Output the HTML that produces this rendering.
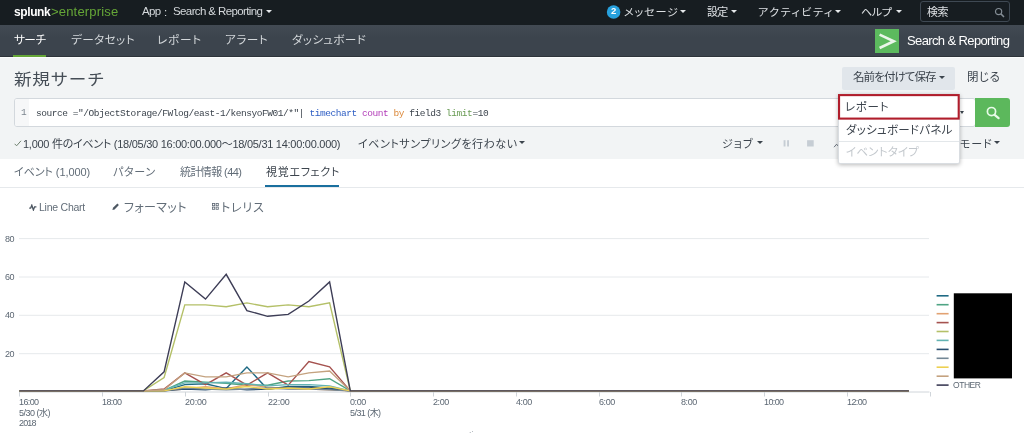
<!DOCTYPE html>
<html lang="ja">
<head>
<meta charset="utf-8">
<title>新規サーチ</title>
<style>
*{box-sizing:border-box;margin:0;padding:0}
html,body{width:1024px;height:433px;overflow:hidden;background:#fff}
body{position:relative;font-family:'Liberation Sans','Noto Sans CJK JP',sans-serif;font-size:12px;color:#3c444d}
.abs{position:absolute;white-space:nowrap}
.t{position:absolute;white-space:nowrap;line-height:1.5;font-feature-settings:'palt';will-change:transform}
.c{position:absolute;width:0;height:0;border-left:3px solid transparent;border-right:3px solid transparent;border-top:3.8px solid #3c444d}
.cw{border-top-color:#e6e9eb}
</style>
</head>
<body>
<div class="abs" style="left:0;top:0;width:1024px;height:24.5px;background:#171d21"></div>
<div class="abs" style="left:0;top:24.5px;width:1024px;height:32.7px;background:linear-gradient(#424a53,#3c444d 40%,#3c444d)"></div>
<div class="abs" style="left:0;top:56.2px;width:1024px;height:1px;background:#2e343a"></div>
<div class="abs" style="left:0;top:57.2px;width:1024px;height:101.8px;background:#f2f4f5"></div>
<div class="abs" style="left:0;top:57.2px;width:1024px;height:1px;background:#fbfcfc"></div>

<!-- top bar shapes -->
<div class="c cw" style="left:266.2px;top:9.6px"></div>
<svg class="abs" style="left:604px;top:3px" width="20" height="18" viewBox="604 3 20 18"><circle cx="613.6" cy="12" r="6.8" fill="#27a1de"/></svg>
<div class="c cw" style="left:679.6px;top:9.6px"></div>
<div class="c cw" style="left:730.8px;top:9.6px"></div>
<div class="c cw" style="left:834.8px;top:9.6px"></div>
<div class="c cw" style="left:896.2px;top:9.6px"></div>
<div class="abs" style="left:920.2px;top:1.4px;width:90px;height:21px;border:1px solid #3f4953;border-radius:3px"></div>
<svg class="abs" style="left:994px;top:6.5px" width="11" height="11" viewBox="0 0 11 11"><circle cx="4.6" cy="4.6" r="3.1" fill="none" stroke="#848d95" stroke-width="1.2"/><path d="M6.9 6.9 L10 10" stroke="#848d95" stroke-width="1.5"/></svg>

<!-- nav bar shapes -->
<div class="abs" style="left:13.4px;top:55.2px;width:33px;height:2px;background:#65a637"></div>
<div class="abs" style="left:874.5px;top:28.8px;width:24.8px;height:24px;background:#5cba5e"></div>
<svg class="abs" style="left:874.5px;top:28.8px" width="24.8" height="24" viewBox="0 0 24.8 24"><path d="M4.6 5.6 L18.8 12.2 L4.6 19" fill="none" stroke="#eaf6ea" stroke-width="2.6"/></svg>

<!-- title row shapes -->
<div class="abs" style="left:841.6px;top:66.6px;width:113.4px;height:23.2px;background:#e1e6eb;border-radius:2px"></div>
<div class="c" style="left:939.4px;top:75.6px"></div>

<!-- search bar -->
<div class="abs" style="left:14.4px;top:98px;width:962px;height:29.2px;background:#fff;border:1px solid #d3d8dd;border-radius:3px"></div>
<div class="abs" style="left:15.4px;top:99px;width:13.4px;height:27.2px;background:#f6f7f8;border-radius:2px 0 0 2px"></div>
<div class="abs" style="left:35.5px;top:106.8px;font-family:'Liberation Mono',monospace;font-size:9.5px;letter-spacing:-0.444px;line-height:14px;color:#3c444d;will-change:transform">source ="/ObjectStorage/FWlog/east-1/kensyoFW01/*"| <span style="color:#2f5fc4">timechart</span> <span style="color:#b23cb8">count</span> <span style="color:#dc8a3c">by</span> field3 <span style="color:#6a9c55">limit</span>=10</div>
<div class="c" style="left:960.2px;top:110.8px;border-left-width:2.4px;border-right-width:2.4px;border-top-width:3.2px"></div>
<div class="abs" style="left:975.3px;top:98.2px;width:34.7px;height:29px;background:#5cb85c;border-radius:0 3px 3px 0"></div>
<svg class="abs" style="left:984px;top:104px" width="17" height="17" viewBox="0 0 17 17"><circle cx="7.5" cy="7.6" r="4.1" fill="none" stroke="#e8fbe8" stroke-width="1.7"/><path d="M10.6 10.8 L14.6 14.2" stroke="#e8fbe8" stroke-width="2.2" stroke-linecap="round"/></svg>

<!-- status row shapes -->
<svg class="abs" style="left:13.6px;top:140.4px" width="8" height="7" viewBox="0 0 8 7"><path d="M0.6 3.8 L2.6 5.8 L7 0.8" fill="none" stroke="#6f806f" stroke-width="1"/></svg>
<div class="c" style="left:518.8px;top:141.2px"></div>
<div class="c" style="left:757.4px;top:141.2px"></div>
<svg class="abs" style="left:780px;top:138px" width="40" height="12" viewBox="780 138 40 12"><g fill="#c6cdd4"><rect x="783.6" y="140.2" width="1.9" height="6.3"/><rect x="787.1" y="140.2" width="1.9" height="6.3"/><rect x="807.1" y="140.2" width="6.6" height="6.3"/></g></svg>
<svg class="abs" style="left:833px;top:142.5px" width="6" height="5" viewBox="0 0 6 5"><path d="M1 4.2 L3.6 1.2 L6 4" fill="none" stroke="#5c6773" stroke-width="0.9"/></svg>
<div class="c" style="left:994px;top:141.2px"></div>

<!-- dropdown -->
<div class="abs" style="left:838px;top:93.8px;width:121.5px;height:70.2px;background:#fff;border:1px solid #d9dde1;border-radius:2px;box-shadow:0 1px 4px rgba(0,0,0,.28)"></div>
<svg class="abs" style="left:836px;top:92px" width="126" height="30" viewBox="836 92 126 30"><rect x="839.05" y="95.1" width="119.65" height="23.5" fill="none" stroke="#b01d2b" stroke-width="2.1"/></svg>
<div class="abs" style="left:839px;top:141px;width:119.5px;height:1px;background:#e3e7ea"></div>

<!-- tabs -->
<div class="abs" style="left:0;top:187px;width:1024px;height:1px;background:#e6e9ec"></div>
<div class="abs" style="left:264.5px;top:184.8px;width:74.5px;height:2px;background:#1a6f9e"></div>

<!-- viz toolbar icons -->
<svg class="abs" style="left:28.8px;top:203.6px" width="8" height="7" viewBox="0 0 8 7"><path d="M0.2 4.2 L1.6 4.2 L2.8 1.2 L4.4 6 L5.6 2.8 L7.4 2.8" fill="none" stroke="#4d5762" stroke-width="1.3"/></svg>
<svg class="abs" style="left:111.8px;top:203.2px" width="7.4" height="7.4" viewBox="0 0 7.4 7.4"><path d="M0.4 7 L1 4.8 L5.4 0.5 L6.9 2 L2.6 6.4 Z" fill="#4d5762"/></svg>
<svg class="abs" style="left:211.6px;top:203.3px" width="7" height="7" viewBox="0 0 7 7"><g fill="none" stroke="#5c6773" stroke-width="0.8"><rect x="0.5" y="0.5" width="2.2" height="2.2"/><rect x="4.1" y="0.5" width="2.2" height="2.2"/><rect x="0.5" y="4.1" width="2.2" height="2.2"/><rect x="4.1" y="4.1" width="2.2" height="2.2"/></g></svg>

<svg class="abs" style="left:0;top:220px" width="1024" height="213" viewBox="0 220 1024 213">
<line x1="19" y1="353.7" x2="929" y2="353.7" stroke="#e6e9ec" stroke-width="1"/>
<line x1="19" y1="315.3" x2="929" y2="315.3" stroke="#e6e9ec" stroke-width="1"/>
<line x1="19" y1="277.0" x2="929" y2="277.0" stroke="#e6e9ec" stroke-width="1"/>
<line x1="19" y1="238.6" x2="929" y2="238.6" stroke="#e6e9ec" stroke-width="1"/>
<line x1="19" y1="392" x2="929.5" y2="392" stroke="#d0d5da" stroke-width="1"/>
<line x1="19.5" y1="392" x2="19.5" y2="396.5" stroke="#d0d5da" stroke-width="1"/>
<line x1="102.5" y1="392" x2="102.5" y2="396.5" stroke="#d0d5da" stroke-width="1"/>
<line x1="185.5" y1="392" x2="185.5" y2="396.5" stroke="#d0d5da" stroke-width="1"/>
<line x1="268.5" y1="392" x2="268.5" y2="396.5" stroke="#d0d5da" stroke-width="1"/>
<line x1="350.5" y1="392" x2="350.5" y2="396.5" stroke="#d0d5da" stroke-width="1"/>
<line x1="433.5" y1="392" x2="433.5" y2="396.5" stroke="#d0d5da" stroke-width="1"/>
<line x1="516.5" y1="392" x2="516.5" y2="396.5" stroke="#d0d5da" stroke-width="1"/>
<line x1="599.5" y1="392" x2="599.5" y2="396.5" stroke="#d0d5da" stroke-width="1"/>
<line x1="681.5" y1="392" x2="681.5" y2="396.5" stroke="#d0d5da" stroke-width="1"/>
<line x1="764.5" y1="392" x2="764.5" y2="396.5" stroke="#d0d5da" stroke-width="1"/>
<line x1="847.5" y1="392" x2="847.5" y2="396.5" stroke="#d0d5da" stroke-width="1"/>
<line x1="930.5" y1="392" x2="930.5" y2="396.5" stroke="#d0d5da" stroke-width="1"/>
<polyline points="19.3,390.9 143.4,390.9 164.1,390.9 184.8,384.6 205.5,383.8 226.2,388.6 246.9,367.0 267.6,389.2 288.2,386.5 308.9,386.5 329.6,388.0 350.3,390.9 908.9,390.9" fill="none" stroke="#1f6a84" stroke-width="1.4" stroke-linejoin="miter"/>
<polyline points="19.3,390.9 143.4,390.9 164.1,390.3 184.8,381.0 205.5,382.1 226.2,383.3 246.9,385.2 267.6,385.2 288.2,381.0 308.9,380.6 329.6,378.7 350.3,390.9 908.9,390.9" fill="none" stroke="#4FA484" stroke-width="1.4" stroke-linejoin="miter"/>
<polyline points="19.3,390.9 143.4,390.9 164.1,390.5 184.8,389.0 205.5,386.7 226.2,388.6 246.9,384.8 267.6,387.1 288.2,388.6 308.9,389.0 329.6,389.8 350.3,390.9 908.9,390.9" fill="none" stroke="#e2a272" stroke-width="1.4" stroke-linejoin="miter"/>
<polyline points="19.3,390.9 143.4,390.9 164.1,389.0 184.8,372.9 205.5,384.6 226.2,372.9 246.9,385.2 267.6,372.9 288.2,385.2 308.9,361.5 329.6,366.8 350.3,390.9 908.9,390.9" fill="none" stroke="#a5524f" stroke-width="1.4" stroke-linejoin="miter"/>
<polyline points="19.3,390.9 143.4,390.9 164.1,377.5 184.8,304.9 205.5,304.9 226.2,306.8 246.9,302.9 267.6,306.8 288.2,304.9 308.9,306.8 329.6,302.9 350.3,390.9 908.9,390.9" fill="none" stroke="#b4c068" stroke-width="1.4" stroke-linejoin="miter"/>
<polyline points="19.3,390.9 143.4,390.9 164.1,390.1 184.8,382.9 205.5,382.9 226.2,382.3 246.9,383.8 267.6,385.9 288.2,384.6 308.9,384.6 329.6,385.9 350.3,390.9 908.9,390.9" fill="none" stroke="#62B3B2" stroke-width="1.4" stroke-linejoin="miter"/>
<polyline points="19.3,390.9 143.4,390.9 164.1,390.9 184.8,389.0 205.5,389.9 226.2,388.0 246.9,389.9 267.6,389.0 288.2,387.1 308.9,387.1 329.6,389.0 350.3,390.9 908.9,390.9" fill="none" stroke="#294E70" stroke-width="1.4" stroke-linejoin="miter"/>
<polyline points="19.3,390.9 143.4,390.9 164.1,390.9 184.8,388.0 205.5,389.0 226.2,389.9 246.9,389.0 267.6,388.0 288.2,389.0 308.9,389.0 329.6,389.9 350.3,390.9 908.9,390.9" fill="none" stroke="#738795" stroke-width="1.4" stroke-linejoin="miter"/>
<polyline points="19.3,390.9 143.4,390.9 164.1,390.9 184.8,386.7 205.5,388.0 226.2,389.0 246.9,386.5 267.6,389.0 288.2,388.0 308.9,389.0 329.6,386.7 350.3,390.9 908.9,390.9" fill="none" stroke="#EDD051" stroke-width="1.4" stroke-linejoin="miter"/>
<polyline points="19.3,390.9 143.4,390.9 164.1,389.8 184.8,372.9 205.5,376.9 226.2,376.9 246.9,372.9 267.6,372.9 288.2,376.9 308.9,372.9 329.6,371.0 350.3,390.9 908.9,390.9" fill="none" stroke="#c4a27f" stroke-width="1.4" stroke-linejoin="miter"/>
<polyline points="19.3,390.9 143.4,390.9 164.1,371.8 184.8,281.9 205.5,299.1 226.2,274.3 246.9,310.6 267.6,316.3 288.2,314.4 308.9,301.0 329.6,281.9 350.3,390.9 908.9,390.9" fill="none" stroke="#3d3d56" stroke-width="1.4" stroke-linejoin="miter"/>
<line x1="936.6" y1="295.8" x2="948.6" y2="295.8" stroke="#1f6a84" stroke-width="1.6"/>
<line x1="936.6" y1="304.7" x2="948.6" y2="304.7" stroke="#4FA484" stroke-width="1.6"/>
<line x1="936.6" y1="313.7" x2="948.6" y2="313.7" stroke="#e2a272" stroke-width="1.6"/>
<line x1="936.6" y1="322.6" x2="948.6" y2="322.6" stroke="#a5524f" stroke-width="1.6"/>
<line x1="936.6" y1="331.5" x2="948.6" y2="331.5" stroke="#b4c068" stroke-width="1.6"/>
<line x1="936.6" y1="340.4" x2="948.6" y2="340.4" stroke="#62B3B2" stroke-width="1.6"/>
<line x1="936.6" y1="349.4" x2="948.6" y2="349.4" stroke="#294E70" stroke-width="1.6"/>
<line x1="936.6" y1="358.3" x2="948.6" y2="358.3" stroke="#738795" stroke-width="1.6"/>
<line x1="936.6" y1="367.2" x2="948.6" y2="367.2" stroke="#EDD051" stroke-width="1.6"/>
<line x1="936.6" y1="376.2" x2="948.6" y2="376.2" stroke="#c4a27f" stroke-width="1.6"/>
<line x1="936.6" y1="385.1" x2="948.6" y2="385.1" stroke="#3d3d56" stroke-width="1.6"/>
<rect x="953.8" y="293.3" width="58.2" height="85.1" fill="#000"/>
</svg>
<div class="t" style="left:14px;top:2.8px;font-size:12px;color:#ffffff;letter-spacing:-0.4px;font-weight:700;">splunk</div>
<div class="t" style="left:50.6px;top:3.4px;font-size:12px;color:#65a637;letter-spacing:0.13px;transform:scaleX(1.09);transform-origin:0 0;">&gt;enterprise</div>
<div class="t" style="left:141.7px;top:3.3px;font-size:11.5px;color:#d5d9dc;letter-spacing:-0.6px;">App</div>
<div class="t" style="left:164px;top:3.5px;font-size:11.5px;color:#d5d9dc;letter-spacing:0px;">:</div>
<div class="t" style="left:173.4px;top:3.3px;font-size:11.5px;color:#d5d9dc;letter-spacing:-0.61px;">Search &amp; Reporting</div>
<div class="t" style="left:610.9px;top:3.9px;font-size:9.5px;color:#ffffff;letter-spacing:0px;font-weight:700;">2</div>
<div class="t" style="left:623.9px;top:4.8px;font-size:10.3px;color:#dde0e3;letter-spacing:0.76px;transform:scaleX(1.08);transform-origin:0 0;">メッセージ</div>
<div class="t" style="left:707px;top:4.1px;font-size:11px;color:#dde0e3;letter-spacing:-0.7px;">設定</div>
<div class="t" style="left:757.8px;top:4.8px;font-size:10.3px;color:#dde0e3;letter-spacing:1.27px;transform:scaleX(1.08);transform-origin:0 0;">アクティビティ</div>
<div class="t" style="left:861px;top:4.8px;font-size:10.3px;color:#dde0e3;letter-spacing:-0.46px;transform:scaleX(1.08);transform-origin:0 0;">ヘルプ</div>
<div class="t" style="left:926.8px;top:4.1px;font-size:11px;color:#dde0e3;letter-spacing:-0.6px;">検索</div>
<div class="t" style="left:14px;top:32.3px;font-size:11px;color:#ffffff;letter-spacing:-0.52px;transform:scaleX(1.06);transform-origin:0 0;">サーチ</div>
<div class="t" style="left:70.6px;top:32.3px;font-size:11px;color:#d3d7da;letter-spacing:0.34px;transform:scaleX(1.06);transform-origin:0 0;">データセット</div>
<div class="t" style="left:157.3px;top:32.3px;font-size:11px;color:#d3d7da;letter-spacing:0.69px;transform:scaleX(1.06);transform-origin:0 0;">レポート</div>
<div class="t" style="left:225.1px;top:32.3px;font-size:11px;color:#d3d7da;letter-spacing:0.38px;transform:scaleX(1.06);transform-origin:0 0;">アラート</div>
<div class="t" style="left:292.3px;top:32.3px;font-size:11px;color:#d3d7da;letter-spacing:0.2px;transform:scaleX(1.06);transform-origin:0 0;">ダッシュボード</div>
<div class="t" style="left:907.4px;top:30.6px;font-size:13px;color:#ffffff;letter-spacing:-0.62px;">Search &amp; Reporting</div>
<div class="t" style="left:14px;top:68.4px;font-size:16px;color:#454d56;letter-spacing:0.57px;font-feature-settings:normal;transform:scaleX(1.1);transform-origin:0 0;">新規サーチ</div>
<div class="t" style="left:852.7px;top:69.4px;font-size:11.5px;color:#3c444d;letter-spacing:-0.9px;">名前を付けて保存</div>
<div class="t" style="left:966.7px;top:69.4px;font-size:11.5px;color:#3c444d;letter-spacing:0.55px;">閉じる</div>
<div class="t" style="left:20.8px;top:106.2px;font-size:9.5px;color:#7b858e;letter-spacing:0px;font-family:'Liberation Mono',monospace;">1</div>
<div class="t" style="left:23.2px;top:136.4px;font-size:11px;color:#3c444d;letter-spacing:-0.27px;">1,000 件のイベント (18/05/30 16:00:00.000～18/05/31 14:00:00.000)</div>
<div class="t" style="left:357.6px;top:136.4px;font-size:11px;color:#3c444d;letter-spacing:0.56px;">イベントサンプリングを行わない</div>
<div class="t" style="left:722.4px;top:136.4px;font-size:11px;color:#3c444d;letter-spacing:1.05px;">ジョブ</div>
<div class="t" style="left:960.2px;top:136.4px;font-size:11px;color:#3c444d;letter-spacing:0.85px;">モード</div>
<div class="t" style="left:845.1px;top:98.9px;font-size:11.5px;color:#3c444d;letter-spacing:0.7px;">レポート</div>
<div class="t" style="left:845.7px;top:121.9px;font-size:11.5px;color:#3c444d;letter-spacing:0.26px;">ダッシュボードパネル</div>
<div class="t" style="left:846px;top:143.6px;font-size:11.5px;color:#c3c8cd;letter-spacing:0.2px;">イベントタイプ</div>
<div class="t" style="left:13.8px;top:163.9px;font-size:11px;color:#626d78;letter-spacing:-0.07px;">イベント (1,000)</div>
<div class="t" style="left:113.3px;top:163.9px;font-size:11px;color:#626d78;letter-spacing:0.73px;">パターン</div>
<div class="t" style="left:179.7px;top:163.9px;font-size:11px;color:#626d78;letter-spacing:-0.59px;">統計情報 (44)</div>
<div class="t" style="left:265.6px;top:163.9px;font-size:11px;color:#3c444d;letter-spacing:0.72px;">視覚エフェクト</div>
<div class="t" style="left:38.8px;top:199.8px;font-size:10.5px;color:#626d78;letter-spacing:-0.24px;">Line Chart</div>
<div class="t" style="left:123.6px;top:198.6px;font-size:12px;color:#626d78;letter-spacing:0.36px;">フォーマット</div>
<div class="t" style="left:221.3px;top:198.6px;font-size:12px;color:#626d78;letter-spacing:0.83px;">トレリス</div>
<div class="t" style="left:4.9px;top:232.5px;font-size:9px;color:#5c6773;letter-spacing:-0.4px;">80</div>
<div class="t" style="left:4.9px;top:270.8px;font-size:9px;color:#5c6773;letter-spacing:-0.4px;">60</div>
<div class="t" style="left:4.9px;top:309.2px;font-size:9px;color:#5c6773;letter-spacing:-0.4px;">40</div>
<div class="t" style="left:4.9px;top:347.6px;font-size:9px;color:#5c6773;letter-spacing:-0.4px;">20</div>
<div class="t" style="left:19.3px;top:396px;font-size:9px;color:#5c6773;letter-spacing:-0.6px;">16:00</div>
<div class="t" style="left:102.05px;top:396px;font-size:9px;color:#5c6773;letter-spacing:-0.6px;">18:00</div>
<div class="t" style="left:184.8px;top:396px;font-size:9px;color:#5c6773;letter-spacing:-0.17px;">20:00</div>
<div class="t" style="left:267.55px;top:396px;font-size:9px;color:#5c6773;letter-spacing:-0.17px;">22:00</div>
<div class="t" style="left:350.3px;top:396px;font-size:9px;color:#5c6773;letter-spacing:-0.4px;">0:00</div>
<div class="t" style="left:433.05px;top:396px;font-size:9px;color:#5c6773;letter-spacing:-0.4px;">2:00</div>
<div class="t" style="left:515.8px;top:396px;font-size:9px;color:#5c6773;letter-spacing:-0.4px;">4:00</div>
<div class="t" style="left:598.55px;top:396px;font-size:9px;color:#5c6773;letter-spacing:-0.4px;">6:00</div>
<div class="t" style="left:681.3px;top:396px;font-size:9px;color:#5c6773;letter-spacing:-0.4px;">8:00</div>
<div class="t" style="left:764.05px;top:396px;font-size:9px;color:#5c6773;letter-spacing:-0.6px;">10:00</div>
<div class="t" style="left:846.8px;top:396px;font-size:9px;color:#5c6773;letter-spacing:-0.6px;">12:00</div>
<div class="t" style="left:19.3px;top:406.6px;font-size:9px;color:#5c6773;letter-spacing:-0.5px;">5/30 (水)</div>
<div class="t" style="left:19.3px;top:417px;font-size:9px;color:#5c6773;letter-spacing:-0.83px;">2018</div>
<div class="t" style="left:350.4px;top:406.6px;font-size:9px;color:#5c6773;letter-spacing:-0.56px;">5/31 (木)</div>
<div class="t" style="left:953.3px;top:379.2px;font-size:8.5px;color:#5c6773;letter-spacing:-0.45px;">OTHER</div>
<div class="t" style="left:464px;top:429.3px;font-size:9px;color:#8a939c;letter-spacing:0px;">_time</div>
</body>
</html>
